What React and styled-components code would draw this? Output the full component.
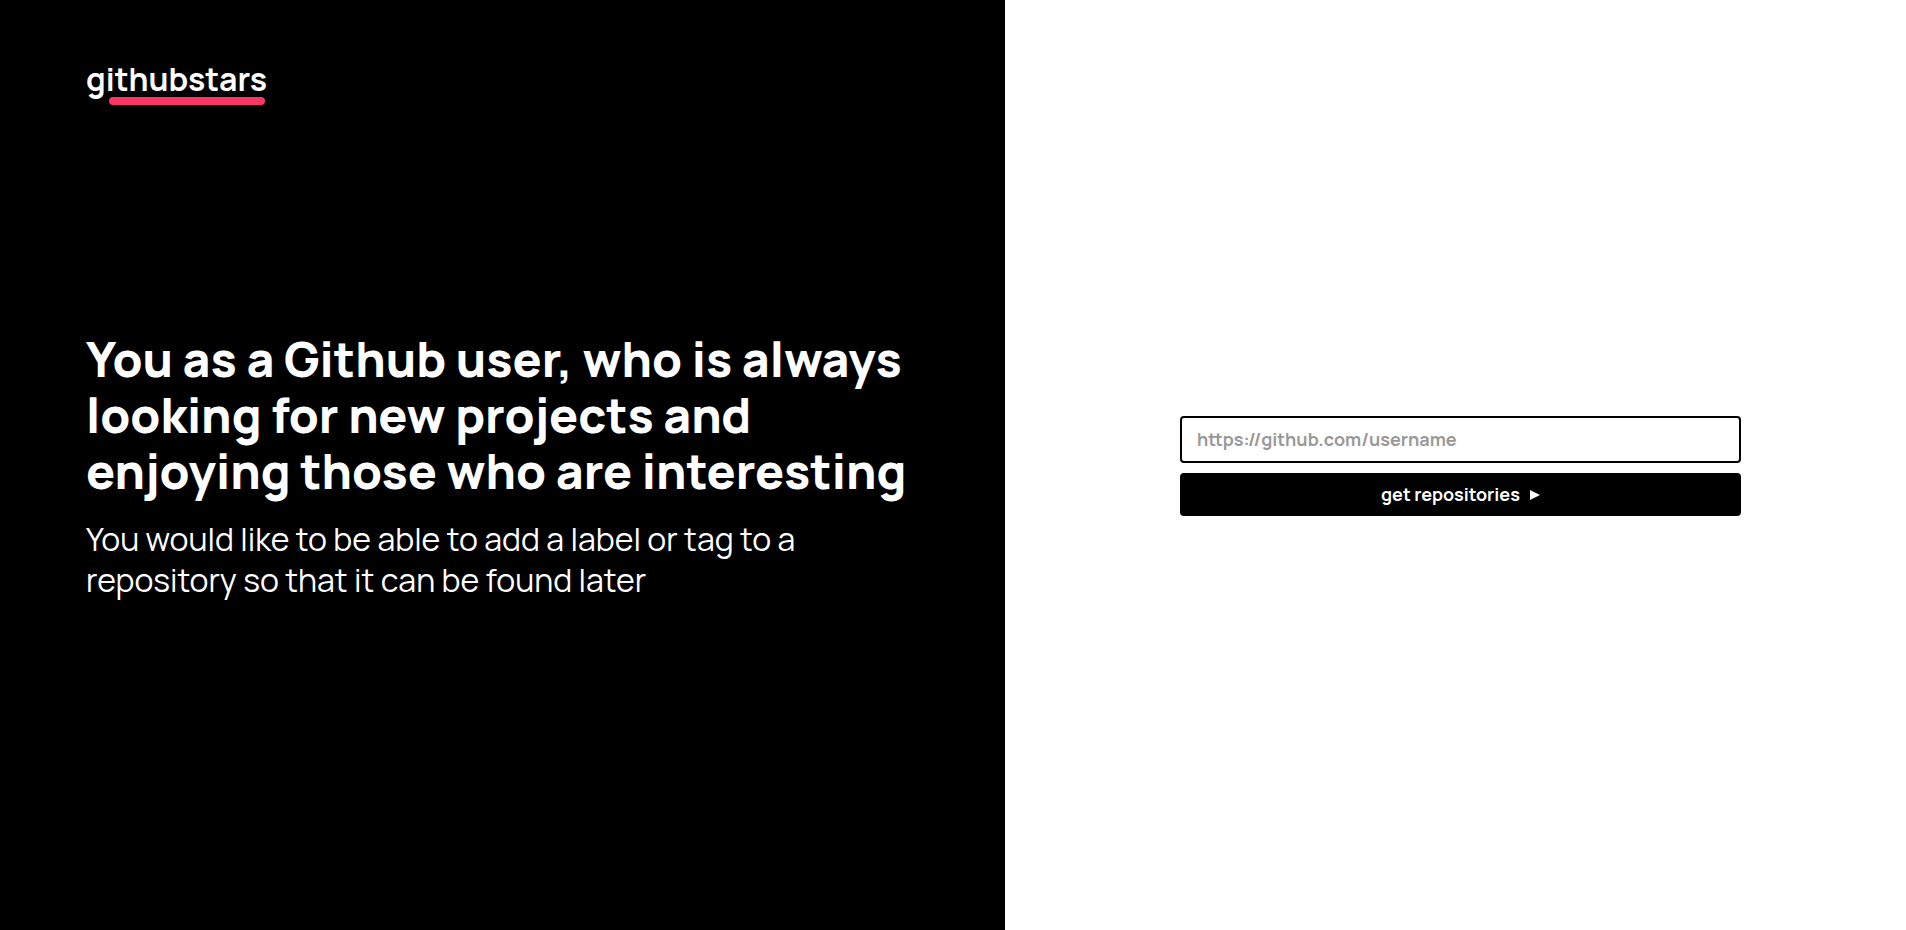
import React from "react";
import styled, { createGlobalStyle } from "styled-components";

const GlobalStyle = createGlobalStyle`
  * { box-sizing: border-box; margin: 0; padding: 0; }
  body { background: #fefefe; font-family: Manrope, Inter, sans-serif; }
`;

const Page = styled.main`
  display: flex;
  height: 100vh;
  overflow: hidden;
`;

const Intro = styled.section`
  display: grid;
  grid-template-rows: 1fr auto 1fr;
  flex: 0 0 1005px;
  padding: 2px 86px 0 86px;
  background: #000;
  color: #fff;
`;

const Logo = styled.div`
  position: relative;
  justify-self: start;
  align-self: start;
  width: 180px;
  margin-top: 58px;
  font-size: 32px;
  font-weight: 700;
  line-height: 38px;

  &::after {
    content: "";
    position: absolute;
    left: 23px;
    top: 37px;
    width: 156px;
    height: 8px;
    border-radius: 4px;
    background: #f93664;
  }
`;

const Title = styled.h1`
  font-size: 48px;
  font-weight: 800;
  line-height: 56px;
`;

const Description = styled.p`
  max-width: 740px;
  margin-top: 20px;
  font-size: 32px;
  font-weight: 400;
  line-height: 41px;
`;

const FormPanel = styled.section`
  display: flex;
  flex: 1;
  align-items: center;
  padding: 2px 165px 0 175px;
`;

const Form = styled.form`
  display: flex;
  flex-direction: column;
  gap: 10px;
  width: 100%;
`;

const Input = styled.input`
  height: 47px;
  padding: 0 15px 1px;
  border: 2px solid #000;
  border-radius: 4px;
  outline: none;
  background: #fff;
  font: 700 18px Manrope, Inter, sans-serif;

  &::placeholder { color: #999; opacity: 1; }
`;

const Button = styled.button`
  display: flex;
  align-items: center;
  justify-content: center;
  gap: 10px;
  height: 43px;
  padding-bottom: 2px;
  border: 0;
  border-radius: 4px;
  background: #000;
  color: #fff;
  font: 700 18px Manrope, Inter, sans-serif;
`;

const Arrow = styled.svg`
  width: 10px;
  height: 10px;
  margin-top: 3px;
  fill: currentColor;
`;

export default function App() {
  return (
    <Page>
      <GlobalStyle />
      <Intro>
        <Logo>githubstars</Logo>
        <div>
          <Title>
            You as a Github user, who is always looking for new projects and enjoying those who are interesting
          </Title>
          <Description>
            You would like to be able to add a label or tag to a repository so that it can be found later
          </Description>
        </div>
      </Intro>
      <FormPanel>
        <Form onSubmit={(e) => e.preventDefault()}>
          <Input placeholder="https://github.com/username" />
          <Button type="submit">
            get repositories
            <Arrow viewBox="0 0 10 10"><path d="M0 0 10 5 0 10Z" /></Arrow>
          </Button>
        </Form>
      </FormPanel>
    </Page>
  );
}
